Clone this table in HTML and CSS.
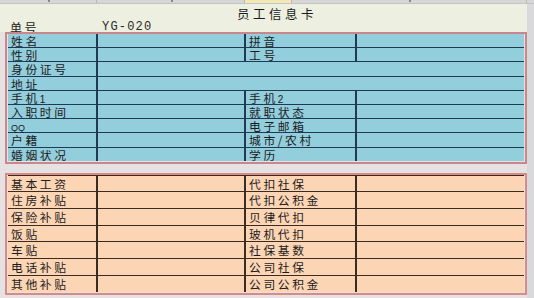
FILE: index.html
```html
<!DOCTYPE html>
<html lang="zh">
<head>
<meta charset="utf-8">
<link rel="stylesheet" href="styles.css">
</head>
<body>
<div class="page">
  <div class="colbar">
    <div class="cb c1"><span class="tick"></span></div>
    <div class="cb c2"><span class="tick"></span></div>
    <div class="cb c3 hl"></div>
    <div class="cb c4"><span class="tick"></span></div>
    <div class="cb c5"></div>
  </div>
  <div class="main">
    <div class="head">
      <div class="title">员工信息卡</div>
      <div class="docno"><span class="lbl">单号</span><span class="no">YG-020</span></div>
    </div>
    <div class="frame blue">
      <table class="grid">
        <colgroup><col class="w1"><col class="w2"><col class="w3"><col></colgroup>
        <tr><td><div class="c">姓名</div></td><td></td><td><div class="c">拼音</div></td><td></td></tr>
        <tr><td><div class="c">性别</div></td><td></td><td><div class="c">工号</div></td><td></td></tr>
        <tr><td><div class="c">身份证号</div></td><td colspan="3"></td></tr>
        <tr><td><div class="c">地址</div></td><td colspan="3"></td></tr>
        <tr><td><div class="c">手机<span class="d">1</span></div></td><td></td><td><div class="c">手机<span class="d">2</span></div></td><td></td></tr>
        <tr><td><div class="c">入职时间</div></td><td></td><td><div class="c">就职状态</div></td><td></td></tr>
        <tr><td><div class="c"><span class="q">QQ</span></div></td><td></td><td><div class="c">电子邮箱</div></td><td></td></tr>
        <tr><td><div class="c">户籍</div></td><td></td><td><div class="c">城市/农村</div></td><td></td></tr>
        <tr><td><div class="c">婚姻状况</div></td><td></td><td><div class="c">学历</div></td><td></td></tr>
      </table>
    </div>
    <div class="frame peach">
      <table class="grid">
        <colgroup><col class="w1"><col class="w2"><col class="w3"><col></colgroup>
        <tr><td><div class="c">基本工资</div></td><td></td><td><div class="c">代扣社保</div></td><td></td></tr>
        <tr><td><div class="c">住房补贴</div></td><td></td><td><div class="c">代扣公积金</div></td><td></td></tr>
        <tr><td><div class="c">保险补贴</div></td><td></td><td><div class="c">贝律代扣</div></td><td></td></tr>
        <tr><td><div class="c">饭贴</div></td><td></td><td><div class="c">玻机代扣</div></td><td></td></tr>
        <tr><td><div class="c">车贴</div></td><td></td><td><div class="c">社保基数</div></td><td></td></tr>
        <tr><td><div class="c">电话补贴</div></td><td></td><td><div class="c">公司社保</div></td><td></td></tr>
        <tr><td><div class="c">其他补贴</div></td><td></td><td><div class="c">公司公积金</div></td><td></td></tr>
      </table>
    </div>
  </div>
</div>
</body>
</html>
```
FILE: styles.css
```css
html, body {
  margin: 0;
  padding: 0;
}
body {
  width: 534px;
  height: 298px;
  overflow: hidden;
  background: #d9d8da;
  font-family: "Noto Sans CJK SC", "Noto Sans", sans-serif;
  color: #1c1c1c;
}
.page {
  width: 534px;
  height: 298px;
  display: flex;
  flex-direction: column;
}
.colbar {
  height: 3px;
  display: flex;
  background: #d6d6d6;
  border-bottom: 1px solid #c4c4c4;
}
.cb {
  position: relative;
  border-right: 1px solid #b8b8b8;
  box-sizing: border-box;
}
.c1 { width: 97px; }
.c2 { width: 148px; }
.c3 { width: 47px; }
.c4 { width: 235px; }
.c5 { flex: 1; border-right: none; }
.hl { background: #f4e9b4; }
.tick {
  position: absolute;
  left: 50%;
  top: 0;
  width: 2px;
  height: 2px;
  background: #888;
}
.main {
  width: 527px;
  flex: 1;
  background: #e6e2e4;
  display: flex;
  flex-direction: column;
  padding: 0 0 0 5px;
  box-sizing: border-box;
}
.head {
  background: #edefe0;
  margin-left: -5px;
  padding-left: 5px;
  height: 28px;
  display: flex;
  flex-direction: column;
}
.title {
  text-align: center;
  font-size: 12.5px;
  letter-spacing: 3.5px;
  line-height: 15px;
  padding: 2px 0 0 0;
  margin-left: 22px;
}
.docno {
  display: flex;
  align-items: center;
  height: 12px;
  font-size: 12px;
}
.lbl {
  width: 92px;
  padding-left: 5px;
  letter-spacing: 2.5px;
}
.no {
  font-family: "Liberation Mono", "DejaVu Sans Mono", monospace;
  letter-spacing: 1.2px;
  font-size: 12px;
  color: #2a2a2a;
}
.frame {
  width: 522px;
  box-sizing: border-box;
  border: 2px solid #c9868b;
  padding: 0 1px 1px 1px;
}
.peach { margin-top: 9px; border-color: #d98a82; }
.grid {
  width: 100%;
  border-collapse: collapse;
  table-layout: fixed;
}
col.w1 { width: 89px; }
col.w2 { width: 148px; }
col.w3 { width: 111px; }
.grid td {
  padding: 0 0 0 3px;
  vertical-align: top;
}
.c {
  font-size: 11.8px;
  letter-spacing: 2.6px;
  white-space: nowrap;
  height: 12px;
  line-height: 12px;
  padding-top: 1px;
}
.blue .grid td {
  background: #93cedd;
  height: 13.2px;
  border-top: 1px solid #1f3a52;
  border-bottom: 1px solid #1f3a52;
  border-left: 2px solid #1f3a52;
}
.blue .grid td:first-child { border-left: none; }
.blue .grid tr:first-child td { border-top: none; }
.blue .grid tr:last-child td { border-bottom: none; }
.peach .grid td {
  background: #fcd5b5;
  height: 15.7px;
  border-top: 1px solid #3c2b20;
  border-bottom: 1px solid #3c2b20;
  border-left: 2px solid #3c2b20;
}
.peach .c { padding-top: 2px; }
.peach .grid td:first-child { border-left: none; }
.peach .grid tr:last-child td { border-bottom: none; }
.d {
  font-family: "Liberation Sans", sans-serif;
  font-size: 10px;
  line-height: 10px;
  letter-spacing: 0;
}
.q {
  font-family: "Liberation Sans", sans-serif;
  font-size: 9px;
  line-height: 9px;
  letter-spacing: 0;
}
```
